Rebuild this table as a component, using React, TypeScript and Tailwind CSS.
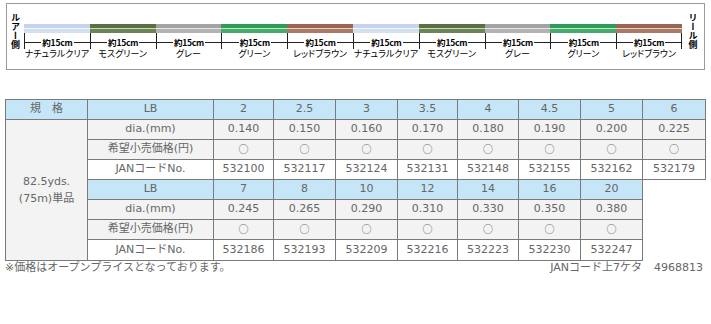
const segs = [
  { label: "ナチュラルクリア", top: "bg-[#c4d4ec]", mid: "bg-[#f4f7fc]", bot: "bg-[#d4dff1]" },
  { label: "モスグリーン", top: "bg-[#58713f]", mid: "bg-[#cdd6c3]", bot: "bg-[#6d8556]" },
  { label: "グレー", top: "bg-[#a3a3a3]", mid: "bg-[#e6e6e6]", bot: "bg-[#b3b3b3]" },
  { label: "グリーン", top: "bg-[#2e9c59]", mid: "bg-[#c2e6cf]", bot: "bg-[#47ab6c]" },
  { label: "レッドブラウン", top: "bg-[#9b6752]", mid: "bg-[#e6d3cb]", bot: "bg-[#a97b67]" },
];

const lb1 = ["2", "2.5", "3", "3.5", "4", "4.5", "5", "6"];
const dia1 = ["0.140", "0.150", "0.160", "0.170", "0.180", "0.190", "0.200", "0.225"];
const jan1 = ["532100", "532117", "532124", "532131", "532148", "532155", "532162", "532179"];
const lb2 = ["7", "8", "10", "12", "14", "16", "20"];
const dia2 = ["0.245", "0.265", "0.290", "0.310", "0.330", "0.350", "0.380"];
const jan2 = ["532186", "532193", "532209", "532216", "532223", "532230", "532247"];

const cell = "border border-[#7a7a7a] text-center p-0";
const blue = "bg-[#c4e6f7]";
const gray = "bg-[#f3f3f3]";

function Circle() {
  return <span className="font-['Noto_Sans_CJK_JP'] text-[10px]">○</span>;
}

function Segment({ s, last }: { s: (typeof segs)[number]; last: boolean }) {
  return (
    <div className="flex-1 flex flex-col">
      <div className={`h-[4px] ${s.top}`} />
      <div className={`h-[1px] ${s.mid}`} />
      <div className={`h-[4px] ${s.bot}`} />
      <div className={`h-[16px] pt-[2px] flex items-center border-l border-[#222] ${last ? "border-r" : ""}`}>
        <div className="flex-1 h-px bg-[#222]" />
        <span className="px-[1px] text-[8.5px] leading-[9px] font-bold text-black tracking-[-0.2px]">約15cm</span>
        <div className="flex-1 h-px bg-[#222]" />
      </div>
      <div className="text-center text-[9px] leading-[9px] text-black [font-feature-settings:'palt']">{s.label}</div>
    </div>
  );
}

export default function App() {
  const all = [...segs, ...segs];
  return (
    <div className="w-[711px] h-[324px] bg-white text-[#666] font-['DejaVu_Sans','Noto_Sans_CJK_JP',sans-serif]">
      <div className="pt-[3px] pl-[6px]">
        <div className="w-[699px] h-[67px] border border-[#9a9a9a] flex font-['Noto_Sans_CJK_JP',sans-serif]">
          <div className="w-[17px] pt-[9px] flex justify-center">
            <span className="[writing-mode:vertical-rl] text-[9px] leading-none font-bold text-black">ルアー側</span>
          </div>
          <div className="w-[658px] pt-[20px] flex">
            {all.map((s, i) => (
              <Segment key={i} s={s} last={i === all.length - 1} />
            ))}
          </div>
          <div className="flex-1 pt-[9px] flex justify-center">
            <span className="[writing-mode:vertical-rl] text-[9px] leading-none font-bold text-black">リール側</span>
          </div>
        </div>
      </div>

      <div className="pl-[5px] mt-[29px] w-[705px]">
        <table className="table-fixed border-collapse w-[700px] text-[11px]">
          <colgroup>
            <col className="w-[82px]" />
            <col className="w-[126px]" />
            <col className="w-[60px]" />
            <col className="w-[62px]" />
            <col className="w-[62px]" />
            <col className="w-[60px]" />
            <col className="w-[61px]" />
            <col className="w-[62px]" />
            <col className="w-[62px]" />
            <col className="w-[63px]" />
          </colgroup>
          <tbody>
            <tr className="h-[20px]">
              <td className={`${cell} ${blue}`}>規　格</td>
              <td className={`${cell} ${blue}`}>LB</td>
              {lb1.map((v) => (
                <td key={v} className={`${cell} ${blue}`}>{v}</td>
              ))}
            </tr>
            <tr className="h-[20px]">
              <td rowSpan={7} className={`${cell} ${gray} leading-[17px]`}>
                82.5yds.
                <br />
                (75m)単品
              </td>
              <td className={`${cell} ${gray}`}>dia.(mm)</td>
              {dia1.map((v) => (
                <td key={v} className={`${cell} ${gray}`}>{v}</td>
              ))}
            </tr>
            <tr className="h-[20px]">
              <td className={`${cell} ${gray}`}>希望小売価格(円)</td>
              {lb1.map((v) => (
                <td key={v} className={`${cell} ${gray}`}><Circle /></td>
              ))}
            </tr>
            <tr className="h-[20px]">
              <td className={`${cell} bg-white`}>JANコードNo.</td>
              {jan1.map((v) => (
                <td key={v} className={`${cell} bg-white`}>{v}</td>
              ))}
            </tr>
            <tr className="h-[20px]">
              <td className={`${cell} ${blue}`}>LB</td>
              {lb2.map((v) => (
                <td key={v} className={`${cell} ${blue}`}>{v}</td>
              ))}
              <td rowSpan={4} className="bg-white p-0" />
            </tr>
            <tr className="h-[20px]">
              <td className={`${cell} ${gray}`}>dia.(mm)</td>
              {dia2.map((v) => (
                <td key={v} className={`${cell} ${gray}`}>{v}</td>
              ))}
            </tr>
            <tr className="h-[20px]">
              <td className={`${cell} ${gray}`}>希望小売価格(円)</td>
              {lb2.map((v) => (
                <td key={v} className={`${cell} ${gray}`}><Circle /></td>
              ))}
            </tr>
            <tr className="h-[21px]">
              <td className={`${cell} bg-white`}>JANコードNo.</td>
              {jan2.map((v) => (
                <td key={v} className={`${cell} bg-white`}>{v}</td>
              ))}
            </tr>
          </tbody>
        </table>
        <div className="w-[698px] flex justify-between text-[11px] leading-[14px]">
          <span>※価格はオープンプライスとなっております。</span>
          <span>
            JANコード上7ケタ<span className="ml-[12px]">4968813</span>
          </span>
        </div>
      </div>
    </div>
  );
}
